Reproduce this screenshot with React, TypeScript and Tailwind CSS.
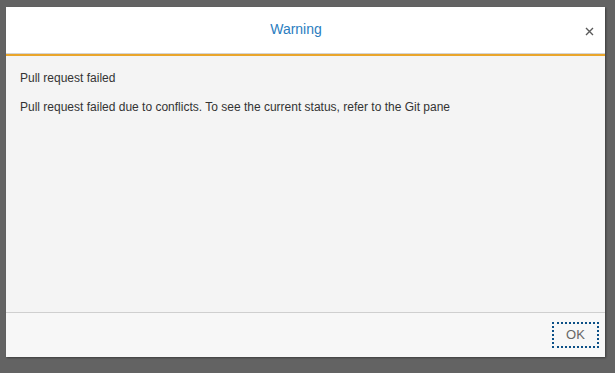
import React from 'react';

export default function App() {
  return (
    <div className="w-[615px] h-[373px] bg-[#636363] pt-[7px] pl-[6px] font-['Liberation_Sans',Arial,sans-serif]">
      <div className="w-[599px] h-[350px] flex flex-col bg-[#f4f4f4] shadow-[1px_1px_2px_rgba(0,0,0,0.4)]">
        {/* Header */}
        <div className="h-[46px] bg-white flex items-center relative">
          <h2 className="flex-1 text-center text-[14px] text-[#2a7dc0] pr-[19px] pb-[1px]">Warning</h2>
          <button className="absolute right-[9px] top-[17px] w-[14px] h-[14px] flex items-center justify-center">
            <svg width="9" height="9" viewBox="0 0 9 9">
              <path d="M1 1L8 8M8 1L1 8" stroke="#5a5a5a" strokeWidth="1.4" />
            </svg>
          </button>
        </div>
        <div className="h-px bg-[#d4d4d4]" />
        <div className="h-[2px] bg-[#e9a52b]" />

        {/* Content */}
        <div className="flex-1 px-[14px] pt-[15px] text-[12px] text-[#333] leading-[14px]">
          <p>Pull request failed</p>
          <p className="mt-[15px]">Pull request failed due to conflicts. To see the current status, refer to the Git pane</p>
        </div>

        {/* Footer */}
        <div className="h-px bg-[#cfcfcf]" />
        <div className="h-[44px] bg-[#f7f7f7] flex items-center justify-end pr-[6px] pb-[1px]">
          <button className="w-[47px] h-[26px] border-2 border-dotted border-[#0b4f86] text-[13px] text-[#666] bg-[#f7f7f7]">
            OK
          </button>
        </div>
      </div>
    </div>
  );
}
